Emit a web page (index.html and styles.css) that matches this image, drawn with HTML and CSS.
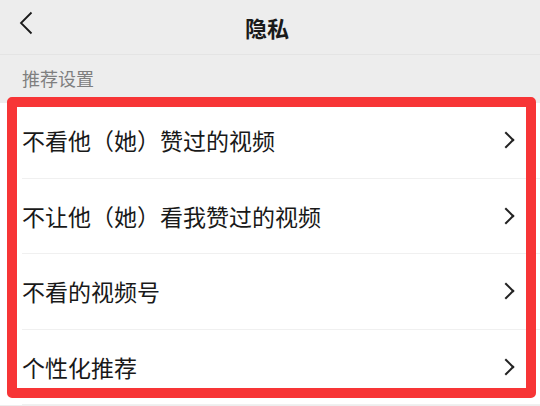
FILE: index.html
```html
<!DOCTYPE html>
<html lang="zh-CN">
<head>
    <meta charset="UTF-8">
    <meta name="viewport" content="width=device-width, initial-scale=1.0">
    <title>隐私</title>
    <link rel="stylesheet" href="styles.css">
</head>
<body>
    <header class="topbar">
        <span class="back">
            <svg width="14" height="24" viewBox="0 0 14 24"><path d="M12.5 1.5 L2 12 L12.5 22.5" fill="none" stroke="#1a1a1a" stroke-width="1.8"/></svg>
        </span>
        <h1>隐私</h1>
    </header>

    <div class="section-title">推荐设置</div>

    <div class="list">
        <div class="row"><span>不看他（她）赞过的视频</span><i class="arrow"></i></div>
        <div class="row"><span>不让他（她）看我赞过的视频</span><i class="arrow"></i></div>
        <div class="row"><span>不看的视频号</span><i class="arrow"></i></div>
        <div class="row"><span>个性化推荐</span><i class="arrow"></i></div>
        <div class="highlight"></div>
    </div>
</body>
</html>
```

FILE: styles.css
```css
body {
    margin: 0;
    background-color: #ededed;
    font-family: "Noto Sans CJK SC", "Noto Sans", sans-serif;
    color: #191919;
    width: 540px;
    height: 406px;
    overflow: hidden;
}
.topbar {
    height: 54px;
    display: flex;
    align-items: center;
    justify-content: center;
    position: relative;
    border-bottom: 1px solid #e4e4e4;
    padding-right: 6px;
}
.topbar h1 {
    margin: 0;
    font-size: 22px;
    font-weight: bold;
    color: #1a1a1a;
}
.back {
    position: absolute;
    left: 19px;
    top: 11px;
    display: flex;
}
.section-title {
    height: 48px;
    padding-left: 22px;
    display: flex;
    align-items: center;
    font-size: 18px;
    color: #7f7f7f;
    box-sizing: border-box;
    padding-bottom: 2px;
}
.list {
    background-color: #fff;
    position: relative;
}
.row {
    height: 75.5px;
    margin-left: 22px;
    padding-right: 26px;
    display: flex;
    align-items: center;
    justify-content: space-between;
    border-bottom: 1px solid #f0f0f0;
    box-sizing: border-box;
    font-size: 23px;
}
.row:last-of-type {
    border-bottom: none;
}
.arrow {
    width: 10px;
    height: 10px;
    border-top: 2px solid #222;
    border-right: 2px solid #222;
    transform: rotate(45deg);
    margin-right: 2px;
}
.highlight {
    position: absolute;
    left: 7px;
    top: -6px;
    width: 529px;
    height: 301px;
    border: 10px solid #f73536;
    border-radius: 5px;
    box-sizing: border-box;
}
```
